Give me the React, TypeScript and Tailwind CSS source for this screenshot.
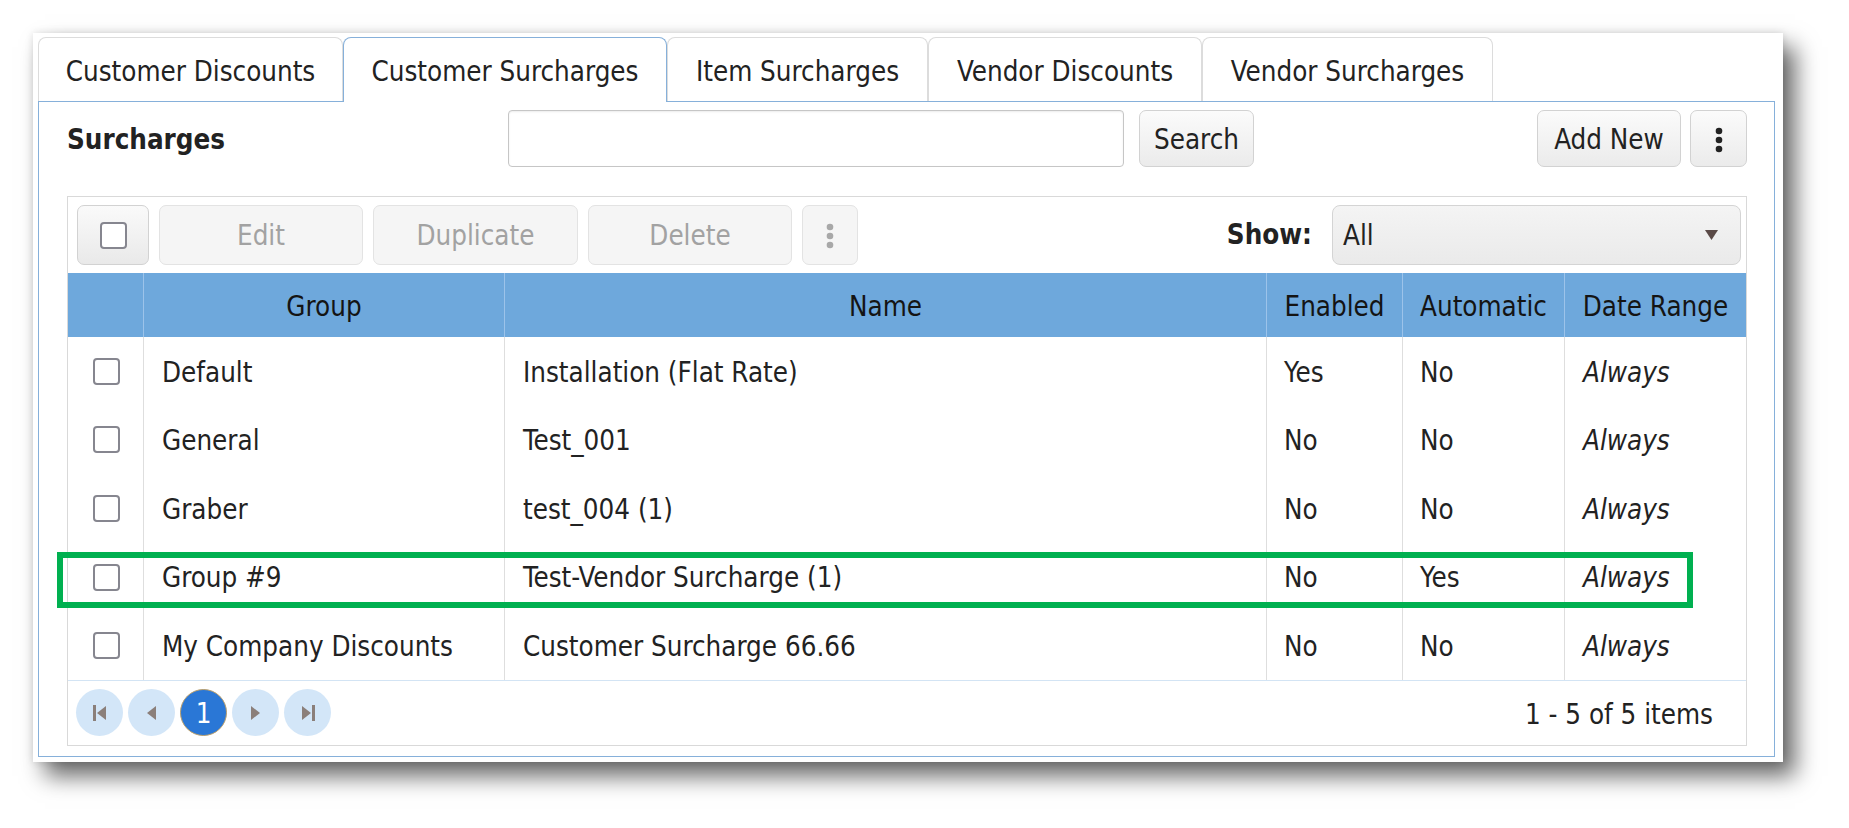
import React from 'react';

const font = "font-['DejaVu_Sans_Condensed','DejaVu_Sans',sans-serif]";

const tabs = [
  { label: 'Customer Discounts', w: 'w-[305px]' },
  { label: 'Customer Surcharges', w: 'w-[324px]', active: true },
  { label: 'Item Surcharges', w: 'w-[261px]' },
  { label: 'Vendor Discounts', w: 'w-[274px]' },
  { label: 'Vendor Surcharges', w: 'w-[291px]' },
];

const rows = [
  { group: 'Default', name: 'Installation (Flat Rate)', enabled: 'Yes', auto: 'No' },
  { group: 'General', name: 'Test_001', enabled: 'No', auto: 'No' },
  { group: 'Graber', name: 'test_004 (1)', enabled: 'No', auto: 'No' },
  { group: 'Group #9', name: 'Test-Vendor Surcharge (1)', enabled: 'No', auto: 'Yes', marked: true },
  { group: 'My Company Discounts', name: 'Customer Surcharge 66.66', enabled: 'No', auto: 'No' },
];

function Checkbox() {
  return <div className="w-[27px] h-[27px] rounded-[4px] border-[2.5px] border-[#86868f] bg-white" />;
}

function Kebab({ color }: { color: string }) {
  return (
    <svg width="10" height="26" viewBox="0 0 10 26">
      <circle cx="5" cy="4" r="3.3" fill={color} />
      <circle cx="5" cy="13" r="3.3" fill={color} />
      <circle cx="5" cy="22" r="3.3" fill={color} />
    </svg>
  );
}

function PagerBtn({ children }: { children: React.ReactNode }) {
  return (
    <div className="w-[47px] h-[47px] rounded-full bg-[#d3e6f8] flex items-center justify-center">{children}</div>
  );
}

const btn = 'h-[57px] pt-[3px] rounded-[7px] border border-[#d2d2d2] bg-gradient-to-b from-[#fbfbfb] to-[#ebebeb] flex items-center justify-center text-[#222]';
const dis = 'h-[60px] pt-[2px] rounded-[7px] border border-[#e3e3e3] bg-[#f5f5f5] flex items-center justify-center text-[#a2a2a2]';
const cols = 'grid grid-cols-[75px_361px_762px_136px_162px_1fr]';

export default function App() {
  return (
    <div className={`w-[1849px] h-[828px] bg-white overflow-hidden pt-[33px] pl-[33px] ${font} text-[27.5px] leading-none text-[#222]`}>
      <div className="w-[1750px] h-[729px] bg-white pl-[5px] pt-[4px] pr-[8px] pb-[5px] flex flex-col shadow-[12px_14px_22px_rgba(0,0,0,0.6),0_0_8px_rgba(0,0,0,0.12)]">
        <div className="flex h-[64px] items-start">
          {tabs.map((t) => (
            <div
              key={t.label}
              className={`${t.w} flex items-center justify-center pt-[4px] rounded-t-[8px] border border-b-0 ${
                t.active ? 'h-[65px] relative z-10 bg-white border-[#86b0da]' : 'h-[64px] bg-white border-[#dcdcdc]'
              }`}
            >
              {t.label}
            </div>
          ))}
        </div>

        <div className="flex-1 border border-[#86b0da] pl-[28px] pr-[27px] pt-[8px] pb-[8px] flex flex-col">
          <div className="flex items-center h-[57px]">
            <div className="w-[441px] font-bold pt-[3px]">Surcharges</div>
            <div className="w-[616px] h-[57px] rounded-[4px] border border-[#c6c6c6] bg-white shadow-[inset_0_1px_2px_rgba(0,0,0,0.08)]" />
            <div className={`${btn} ml-[15px] w-[115px]`}>Search</div>
            <div className={`${btn} ml-auto w-[144px]`}>Add New</div>
            <div className={`${btn} ml-[9px] w-[57px]`}>
              <Kebab color="#222" />
            </div>
          </div>

          <div className="mt-[29px] border border-[#d9d9d9] flex flex-col">
            <div className="h-[76px] flex items-center pl-[9px] pr-[5px] gap-[10px]">
              <div className="w-[72px] h-[60px] rounded-[7px] border border-[#d2d2d2] bg-gradient-to-b from-[#fafafa] to-[#e9e9e9] flex items-center justify-center">
                <Checkbox />
              </div>
              <div className={`${dis} w-[204px]`}>Edit</div>
              <div className={`${dis} w-[205px]`}>Duplicate</div>
              <div className={`${dis} w-[204px]`}>Delete</div>
              <div className={`${dis} w-[56px]`}>
                <Kebab color="#a8a8a8" />
              </div>
              <div className="ml-auto font-bold mr-[10px]">Show:</div>
              <div className="w-[409px] h-[60px] rounded-[8px] border border-[#d4d4d4] bg-gradient-to-b from-[#f4f4f4] to-[#eaeaea] flex items-center pl-[10px] pr-[22px]">
                <span className="pt-[2px]">All</span>
                <svg className="ml-auto" width="13" height="10" viewBox="0 0 13 10">
                  <path d="M0 0h13L6.5 10z" fill="#5a4a47" />
                </svg>
              </div>
            </div>

            <div className={`${cols} h-[64px] bg-[#6ea8dc] text-[#141414]`}>
              <div />
              {['Group', 'Name', 'Enabled', 'Automatic', 'Date Range'].map((h) => (
                <div key={h} className="border-l border-[#9cc3ea] flex items-center justify-center pt-[4px]">
                  {h}
                </div>
              ))}
            </div>

            {rows.map((r) => (
              <div key={r.group} className={`${cols} h-[68.6px] relative`}>
                <div className="flex items-center justify-center pl-px">
                  <Checkbox />
                </div>
                <div className="border-l border-[#dedede] flex items-center pl-[18px] pt-[2px]">{r.group}</div>
                <div className="border-l border-[#dedede] flex items-center pl-[18px] pt-[2px]">{r.name}</div>
                <div className="border-l border-[#dedede] flex items-center pl-[17px] pt-[2px]">{r.enabled}</div>
                <div className="border-l border-[#dedede] flex items-center pl-[17px] pt-[2px]">{r.auto}</div>
                <div className="border-l border-[#dedede] flex items-center pl-[18px] pt-[2px] italic">Always</div>
                {r.marked && (
                  <div className="absolute left-[-11px] top-[9px] w-[1636px] h-[56px] border-[6px] border-[#00b050] pointer-events-none" />
                )}
              </div>
            ))}

            <div className="h-[65px] border-t border-[#d3e4f4] flex items-center pl-[8px] pr-[33px]">
              <div className="flex gap-[5px]">
                <PagerBtn>
                  <svg width="16" height="18" viewBox="0 0 16 18">
                    <rect x="1" y="1" width="3" height="16" fill="#8b7f7a" />
                    <path d="M14 2v14L5 9z" fill="#8b7f7a" />
                  </svg>
                </PagerBtn>
                <PagerBtn>
                  <svg width="11" height="16" viewBox="0 0 11 16">
                    <path d="M10 1v14L1 8z" fill="#8b7f7a" />
                  </svg>
                </PagerBtn>
                <div className="w-[47px] h-[47px] rounded-full bg-[#2a77d6] border border-[#b89d6a] flex items-center justify-center text-white pt-[2px]">
                  1
                </div>
                <PagerBtn>
                  <svg width="11" height="16" viewBox="0 0 11 16">
                    <path d="M1 1v14l9-7z" fill="#8b7f7a" />
                  </svg>
                </PagerBtn>
                <PagerBtn>
                  <svg width="16" height="18" viewBox="0 0 16 18">
                    <path d="M2 2v14l9-7z" fill="#8b7f7a" />
                    <rect x="12" y="1" width="3" height="16" fill="#8b7f7a" />
                  </svg>
                </PagerBtn>
              </div>
              <div className="ml-auto pt-[3px]">1 - 5 of 5 items</div>
            </div>
          </div>
        </div>
      </div>
    </div>
  );
}
